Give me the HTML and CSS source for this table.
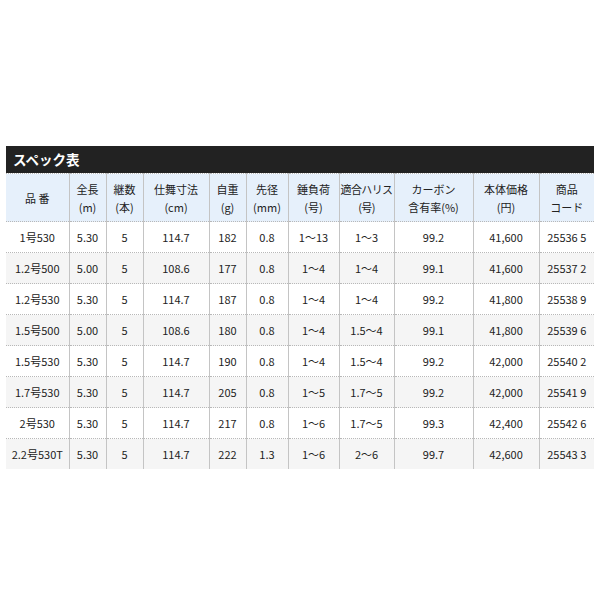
FILE: index.html
```html
<!DOCTYPE html>
<html lang="ja">
<head>
<meta charset="utf-8">
<link rel="stylesheet" href="styles.css">
</head>
<body>
<div class="wrap">
  <div class="title">スペック表</div>
  <table class="spec">
    <colgroup>
      <col class="c1"><col class="c2"><col class="c3"><col class="c4"><col class="c5"><col class="c6"><col class="c7"><col class="c8"><col class="c9"><col class="c10"><col class="c11">
    </colgroup>
    <thead>
      <tr>
        <th>品 番</th>
        <th>全長<br>(m)</th>
        <th>継数<br>(本)</th>
        <th>仕舞寸法<br>(cm)</th>
        <th>自重<br>(g)</th>
        <th>先径<br>(mm)</th>
        <th>錘負荷<br>(号)</th>
        <th class="tight">適合ハリス<br>(号)</th>
        <th>カーボン<br>含有率(%)</th>
        <th>本体価格<br>(円)</th>
        <th>商品<br>コード</th>
      </tr>
    </thead>
    <tbody>
      <tr><td>1号530</td><td>5.30</td><td>5</td><td>114.7</td><td>182</td><td>0.8</td><td>1～13</td><td>1～3</td><td>99.2</td><td>41,600</td><td>25536 5</td></tr>
      <tr><td>1.2号500</td><td>5.00</td><td>5</td><td>108.6</td><td>177</td><td>0.8</td><td>1～4</td><td>1～4</td><td>99.1</td><td>41,600</td><td>25537 2</td></tr>
      <tr><td>1.2号530</td><td>5.30</td><td>5</td><td>114.7</td><td>187</td><td>0.8</td><td>1～4</td><td>1～4</td><td>99.2</td><td>41,800</td><td>25538 9</td></tr>
      <tr><td>1.5号500</td><td>5.00</td><td>5</td><td>108.6</td><td>180</td><td>0.8</td><td>1～4</td><td>1.5～4</td><td>99.1</td><td>41,800</td><td>25539 6</td></tr>
      <tr><td>1.5号530</td><td>5.30</td><td>5</td><td>114.7</td><td>190</td><td>0.8</td><td>1～4</td><td>1.5～4</td><td>99.2</td><td>42,000</td><td>25540 2</td></tr>
      <tr><td>1.7号530</td><td>5.30</td><td>5</td><td>114.7</td><td>205</td><td>0.8</td><td>1～5</td><td>1.7～5</td><td>99.2</td><td>42,000</td><td>25541 9</td></tr>
      <tr><td>2号530</td><td>5.30</td><td>5</td><td>114.7</td><td>217</td><td>0.8</td><td>1～6</td><td>1.7～5</td><td>99.3</td><td>42,400</td><td>25542 6</td></tr>
      <tr><td>2.2号530T</td><td>5.30</td><td>5</td><td>114.7</td><td>222</td><td>1.3</td><td>1～6</td><td>2～6</td><td>99.7</td><td>42,600</td><td>25543 3</td></tr>
    </tbody>
  </table>
</div>
</body>
</html>
```
FILE: styles.css
```css
html, body {
  margin: 0;
  padding: 0;
  background: #fff;
}
body {
  font-family: "Noto Sans CJK JP", "Noto Sans", sans-serif;
  color: #222;
}
.wrap {
  width: 588px;
  margin: 146px 0 0 6px;
}
.title {
  height: 27px;
  background: #222;
  color: #fff;
  font-size: 13.5px;
  font-weight: bold;
  line-height: 27px;
  padding-left: 7px;
  box-sizing: border-box;
}
.spec {
  width: 588px;
  border-collapse: collapse;
  table-layout: fixed;
  font-size: 11px;
}
.c1 { width: 63px; }
.c2 { width: 37px; }
.c3 { width: 37px; }
.c4 { width: 66px; }
.c5 { width: 37px; }
.c6 { width: 42px; }
.c7 { width: 51px; }
.c8 { width: 55px; }
.c9 { width: 79px; }
.c10 { width: 66px; }
.c11 { width: 55px; }
.spec th, .spec td {
  text-align: center;
  padding: 0;
  white-space: nowrap;
  border-left: 1px solid #c4c4c4;
  border-top: 1px dotted #b8b8b8;
  border-bottom: 1px dotted #b8b8b8;
}
.spec th:first-child, .spec td:first-child {
  border-left: none;
}
.spec th {
  background: #e6f0fb;
  font-weight: normal;
  height: 47px;
  line-height: 18px;
}
.spec th.tight {
  letter-spacing: -0.6px;
}
.spec td {
  height: 30px;
  line-height: 14px;
}
.spec tbody tr:nth-child(even) td {
  background: #f5f5f5;
}
.spec tbody tr:last-child td {
  border-bottom: none;
}
```
